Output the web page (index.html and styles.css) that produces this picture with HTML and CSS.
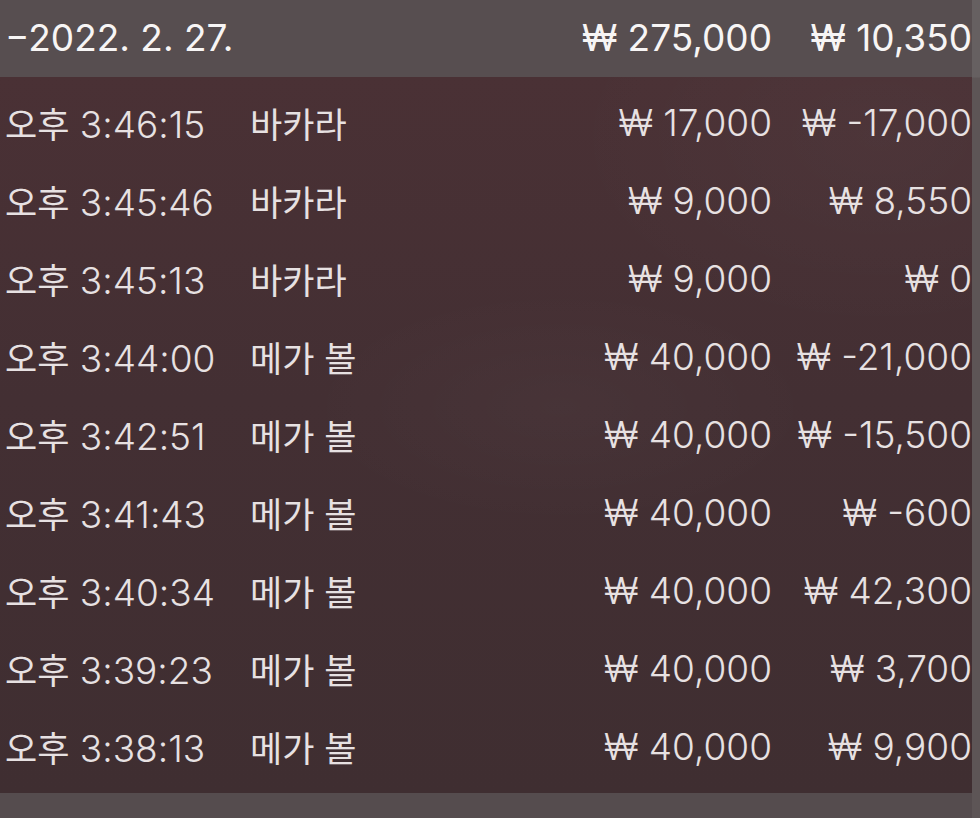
FILE: index.html
```html
<!DOCTYPE html>
<html lang="ko">
<head>
<meta charset="utf-8">
<link rel="stylesheet" href="styles.css">
</head>
<body>
<div class="screen">
  <div class="content">
    <div class="row head">
      <div class="date">−2022. 2. 27.</div>
      <div class="bet">₩ 275,000</div>
      <div class="win">₩ 10,350</div>
    </div>
    <div class="list">
      <div class="row"><div class="time"><span class="ko">오후</span> 3:46:15</div><div class="game ko">바카라</div><div class="bet">₩ 17,000</div><div class="win">₩ -17,000</div></div>
      <div class="row"><div class="time"><span class="ko">오후</span> 3:45:46</div><div class="game ko">바카라</div><div class="bet">₩ 9,000</div><div class="win">₩ 8,550</div></div>
      <div class="row"><div class="time"><span class="ko">오후</span> 3:45:13</div><div class="game ko">바카라</div><div class="bet">₩ 9,000</div><div class="win">₩ 0</div></div>
      <div class="row"><div class="time"><span class="ko">오후</span> 3:44:00</div><div class="game ko">메가 볼</div><div class="bet">₩ 40,000</div><div class="win">₩ -21,000</div></div>
      <div class="row"><div class="time"><span class="ko">오후</span> 3:42:51</div><div class="game ko">메가 볼</div><div class="bet">₩ 40,000</div><div class="win">₩ -15,500</div></div>
      <div class="row"><div class="time"><span class="ko">오후</span> 3:41:43</div><div class="game ko">메가 볼</div><div class="bet">₩ 40,000</div><div class="win">₩ -600</div></div>
      <div class="row"><div class="time"><span class="ko">오후</span> 3:40:34</div><div class="game ko">메가 볼</div><div class="bet">₩ 40,000</div><div class="win">₩ 42,300</div></div>
      <div class="row"><div class="time"><span class="ko">오후</span> 3:39:23</div><div class="game ko">메가 볼</div><div class="bet">₩ 40,000</div><div class="win">₩ 3,700</div></div>
      <div class="row"><div class="time"><span class="ko">오후</span> 3:38:13</div><div class="game ko">메가 볼</div><div class="bet">₩ 40,000</div><div class="win">₩ 9,900</div></div>
    </div>
    <div class="foot"></div>
  </div>
  <div class="scrollbar"></div>
</div>
</body>
</html>
```
FILE: styles.css
```css
html, body {
  margin: 0;
  padding: 0;
  background: #554c4e;
}
.screen {
  width: 980px;
  height: 818px;
  display: flex;
  overflow: hidden;
  font-family: "Inter", "Noto Sans CJK KR", sans-serif;
  font-size: 37px;
  font-weight: 300;
  color: #e7e1e2;
}
.content {
  width: 972px;
  display: flex;
  flex-direction: column;
}
.scrollbar {
  width: 8px;
  background: linear-gradient(#666061 0, #666061 77px, #5d5556 78px, #5d5556 100%);
}
.row {
  display: grid;
  grid-template-columns: 245px 1fr auto 200px;
  align-items: center;
  height: 78px;
  padding-left: 5px;
  white-space: nowrap;
}
.row.head {
  height: 77px;
  padding-bottom: 2px;
  box-sizing: border-box;
  background: #574e50;
  color: #f7f5f5;
  font-weight: 400;
  grid-template-columns: 1fr auto 200px;
}
.list {
  padding: 6px 0 8px;
  background:
    radial-gradient(ellipse 260px 120px at 560px 330px, rgba(255,255,255,0.025), rgba(255,255,255,0) 100%),
    radial-gradient(ellipse 320px 200px at 880px 60px, rgba(255,255,255,0.025), rgba(255,255,255,0) 100%),
    linear-gradient(#4a3135, #432f33 45%, #3f2e31);
}
.foot {
  flex: 1;
  background: #554c4e;
}
.bet, .win {
  text-align: right;
}
.ko {
  font-family: "Noto Sans CJK KR", sans-serif;
  font-size: 35px;
  font-weight: 400;
}
```
